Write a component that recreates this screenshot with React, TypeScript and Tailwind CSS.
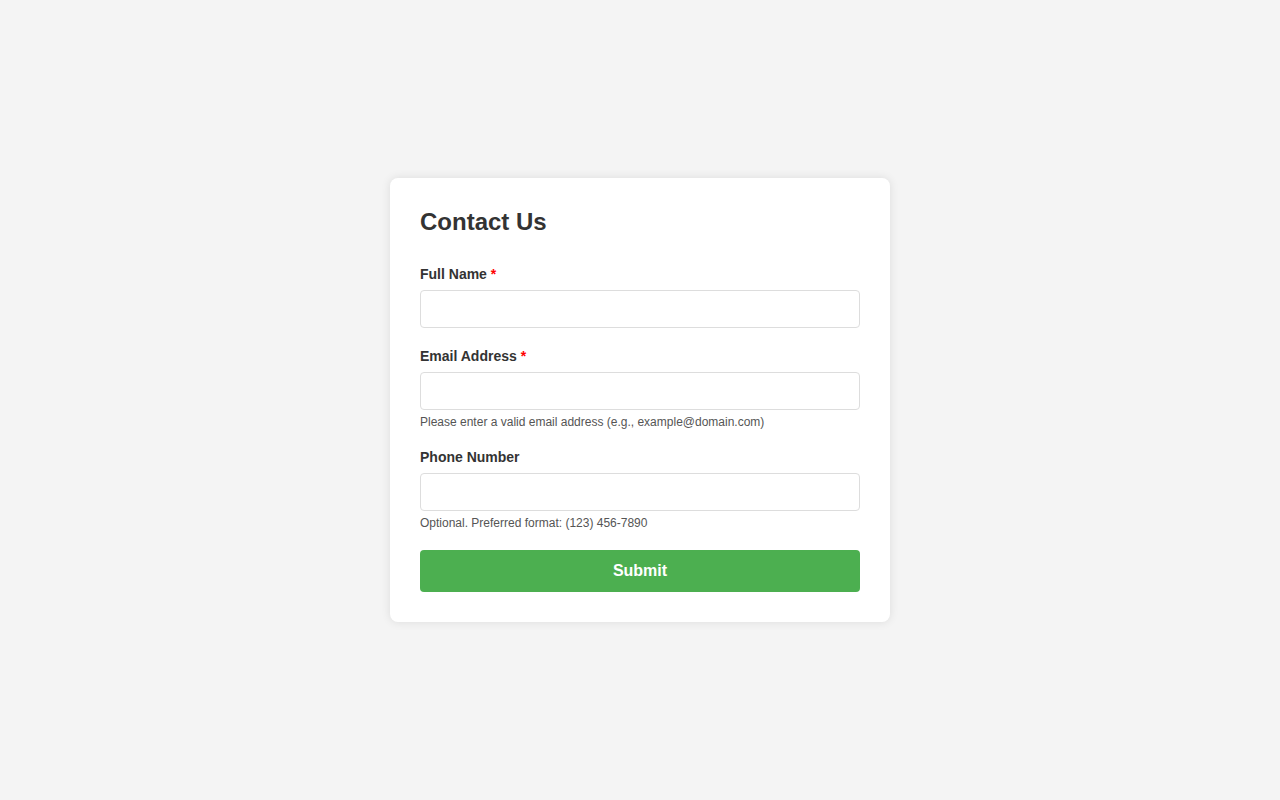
import React from "react"

function Field({
  label,
  required,
  type,
  help,
}: {
  label: string
  required?: boolean
  type: string
  help?: string
}) {
  return (
    <div className="mb-5">
      <label className="mb-2 block text-[14px] leading-4 font-bold text-[#333]">
        {label}
        {required && <span className="text-[#ff0000]"> *</span>}
      </label>
      <input
        type={type}
        className="block h-[38px] w-full rounded border border-[#ddd] bg-white px-2.5 text-[14px] outline-none"
      />
      {help && <p className="mt-[5px] text-[12px] leading-[14px] text-[#555]">{help}</p>}
    </div>
  )
}

export default function App() {
  return (
    <div
      className="flex min-h-screen items-center justify-center bg-[#f4f4f4]"
      style={{ fontFamily: '"Liberation Sans", Arial, sans-serif' }}
    >
      <form
        className="w-[500px] rounded-lg bg-white p-[30px] shadow-[0_0_10px_rgba(0,0,0,0.1)]"
        onSubmit={(e) => e.preventDefault()}
      >
        <h2 className="mb-[30px] text-[24px] leading-7 font-bold text-[#333]">Contact Us</h2>
        <Field label="Full Name" required type="text" />
        <Field
          label="Email Address"
          required
          type="email"
          help="Please enter a valid email address (e.g., example@domain.com)"
        />
        <Field
          label="Phone Number"
          type="tel"
          help="Optional. Preferred format: (123) 456-7890"
        />
        <button
          type="submit"
          className="block h-[42px] w-full rounded bg-[#4caf50] text-[16px] font-bold text-white"
        >
          Submit
        </button>
      </form>
    </div>
  )
}
